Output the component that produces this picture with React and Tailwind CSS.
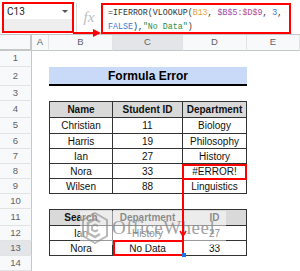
import React from 'react';

const FONT = { fontFamily: '"Liberation Sans", Arial, sans-serif' };

const rowLabels = [1, 2, 3, 4, 5, 6, 7, 8, 9, 10, 11, 12, 13, 14];

const mainData = [
  ['Christian', '11', 'Biology'],
  ['Harris', '19', 'Philosophy'],
  ['Ian', '27', 'History'],
  ['Nora', '33', '#ERROR!'],
  ['Wilsen', '88', 'Linguistics'],
];

const searchData = [
  ['Ian', 'History', '27'],
  ['Nora', 'No Data', '33'],
];

function RowHead({ n }) {
  return (
    <div
      className={`flex items-center justify-center border-b border-r border-b-[#e2e3e3] border-r-[#c4c7c5] text-[9.5px] text-[#5f6368] ${
        n === 13 ? 'bg-[#e3e5e8]' : 'bg-[#f8f9fa]'
      }`}
    >
      {n}
    </div>
  );
}

function Blank() {
  return <div className="bg-white" />;
}

function TCell({ children, bold, head, first, top, className = '' }) {
  return (
    <div
      className={`flex items-center justify-center border-b border-r border-[#333] text-[10px] text-[#111] ${
        first ? 'border-l' : ''
      } ${top ? 'border-t' : ''} ${head ? 'bg-[#d9d9d9]' : 'bg-white'} ${bold ? 'font-bold text-[10.5px]' : ''} ${className}`}
    >
      {children}
    </div>
  );
}

export default function App() {
  const cells = [];

  // column header row
  cells.push(
    <div key="corner" className="bg-[#f8f9fa] border-r-2 border-b-2 border-[#c4c7c5]" />
  );
  ['A', 'B', 'C', 'D', 'E'].forEach((c) =>
    cells.push(
      <div
        key={'h' + c}
        className={`flex items-center justify-center border-b border-r border-b-[#c4c7c5] border-r-[#e2e3e3] text-[9.5px] text-[#5f6368] ${
          c === 'C' ? 'bg-[#e3e5e8]' : 'bg-[#f8f9fa]'
        }`}
      >
        {c}
      </div>
    )
  );

  rowLabels.forEach((n) => {
    cells.push(<RowHead key={'r' + n} n={n} />);
    cells.push(<Blank key={'a' + n} />);

    if (n === 2) {
      cells.push(
        <div
          key="title"
          className="col-span-3 flex items-center justify-center bg-[#c9daf8] border-b-2 border-black text-[12px] font-bold text-black"
        >
          Formula Error
        </div>
      );
    } else if (n === 4) {
      cells.push(<TCell key="t4b" head bold first top>Name</TCell>);
      cells.push(<TCell key="t4c" head bold top>Student ID</TCell>);
      cells.push(<TCell key="t4d" head bold top>Department</TCell>);
    } else if (n >= 5 && n <= 9) {
      const r = mainData[n - 5];
      cells.push(<TCell key={'t' + n + 'b'} first>{r[0]}</TCell>);
      cells.push(<TCell key={'t' + n + 'c'}>{r[1]}</TCell>);
      cells.push(<TCell key={'t' + n + 'd'}>{r[2]}</TCell>);
    } else if (n === 11) {
      cells.push(<TCell key="s11b" head bold first top>Search</TCell>);
      cells.push(<TCell key="s11c" head bold top>Department</TCell>);
      cells.push(<TCell key="s11d" head bold top>ID</TCell>);
    } else if (n === 12 || n === 13) {
      const r = searchData[n - 12];
      cells.push(<TCell key={'s' + n + 'b'} first>{r[0]}</TCell>);
      cells.push(<TCell key={'s' + n + 'c'}>{r[1]}</TCell>);
      cells.push(<TCell key={'s' + n + 'd'}>{r[2]}</TCell>);
    } else {
      cells.push(<Blank key={'b' + n} />);
      cells.push(<Blank key={'c' + n} />);
      cells.push(<Blank key={'d' + n} />);
    }
    cells.push(<Blank key={'e' + n} />);
  });

  return (
    <div className="relative w-[300px] h-[271px] overflow-hidden bg-white" style={FONT}>
      {/* formula bar */}
      <div className="flex h-[35px] items-start border-b border-[#c4c7c5] bg-white">
        <div className="ml-[2px] mt-[2px] flex h-[31px] w-[72px] flex-col border-2 border-[#ff0000]">
          <div className="flex h-[15px] items-center justify-between bg-white pl-[3px] pr-[4px]">
            <span className="text-[10px] text-[#222]" style={{ fontFamily: 'Roboto, sans-serif' }}>C13</span>
            <span className="h-0 w-0 border-x-[3px] border-t-[3px] border-x-transparent border-t-[#555]" />
          </div>
          <div className="flex-1 bg-[#eeeeee]" />
        </div>
        <div className="ml-[2px] mt-[3px] h-[30px] w-px bg-[#dadce0]" />
        <div className="flex h-[34px] w-[24px] items-center justify-center">
          <span
            className="text-[15px] italic text-[#bdbdbd]"
            style={{ fontFamily: '"Liberation Serif", serif' }}
          >
            fx
          </span>
        </div>
        <div
          className="mt-[3px] h-[31px] w-[190px] border-2 border-[#ff0000] bg-white pl-[5px] pt-[1px] text-[8.3px] leading-[14px] text-[#333]"
          style={{ fontFamily: '"Liberation Mono", monospace' }}
        >
          <div>
            =IFERROR(VLOOKUP(<span className="text-[#f0a030]">B13</span>,{' '}
            <span className="text-[#a9469a]">$B$5:$D$9</span>, <span className="text-[#3c78d8]">3</span>,
          </div>
          <div>
            <span className="text-[#3c78d8]">FALSE</span>),<span className="text-[#2e8b3e]">"No Data"</span>)
          </div>
        </div>
      </div>

      {/* sheet grid */}
      <div
        className="grid grid-cols-[32px_17px_64px_70px_64px_1fr] grid-rows-[16px_16px_19px_15px_17px_16px_15px_15px_15px_15px_15px_17px_15px_15px_15px]"
      >
        {cells}
      </div>

      {/* arrow from name box to formula */}
      <svg className="absolute left-[73px] top-[28px]" width="30" height="10" viewBox="0 0 30 10">
        <line x1="0" y1="5" x2="22" y2="5" stroke="#ff0000" strokeWidth="2" />
        <polygon points="20,1 28,5 20,9" fill="#ff0000" />
      </svg>

      {/* #ERROR! highlight */}
      <div className="absolute left-[182px] top-[164px] h-[16px] w-[65px] border-2 border-[#ff0000]" />

      {/* watermark */}
      <div className="absolute left-[80px] top-[211px] flex h-[34px] w-[146px] items-center bg-white/50">
        <svg width="26" height="32" viewBox="0 0 26 32" className="ml-[2px] opacity-60">
          <polygon points="13,1 25,8 25,24 13,31 1,24 1,8" fill="none" stroke="#8a8a8a" strokeWidth="2" />
          <path d="M18 10 L13 7 L6 11 L6 21 L13 25 L18 22" fill="none" stroke="#8a8a8a" strokeWidth="2.5" />
          <path d="M16 14 L13 12.5 L10 14 L10 18 L13 19.5 L16 18" fill="none" stroke="#8a8a8a" strokeWidth="2" />
        </svg>
        <span
          className="ml-[4px] text-[19px] tracking-[0.5px] text-[#8c8c8c] opacity-80"
          style={{ fontFamily: '"Liberation Serif", serif' }}
        >
          OfficeWheel
        </span>
      </div>

      {/* No Data highlight + connector */}
      <div className="absolute left-[113px] top-[240px] h-[16px] w-[71px] border-2 border-[#ff0000]" />
      <svg className="absolute left-[178px] top-[178px]" width="10" height="80" viewBox="0 0 10 80">
        <line x1="5" y1="0" x2="5" y2="77" stroke="#ff0000" strokeWidth="2" />
        <polyline points="2,53 5,58 8,53" fill="none" stroke="#ff0000" strokeWidth="1.5" />
      </svg>
      <div className="absolute left-[182px] top-[253px] h-[4px] w-[4px] bg-[#1a73e8]" />
    </div>
  );
}
